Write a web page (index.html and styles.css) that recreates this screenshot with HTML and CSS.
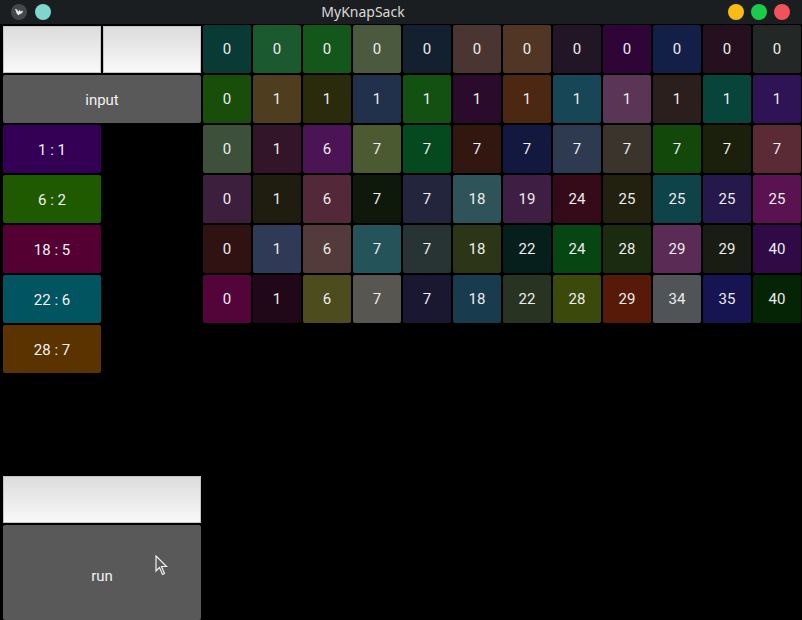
FILE: index.html
```html
<!DOCTYPE html>
<html>
<head>
<meta charset="utf-8">
<title>MyKnapSack</title>
<link rel="stylesheet" href="styles.css">
</head>
<body>
<div class="window">
  <div class="titlebar">
    <div class="tb-left">
      <span class="logo">
        <svg width="16" height="16" viewBox="0 0 16 16">
          <circle cx="8" cy="8" r="8" fill="#45474a"/>
          <path d="M4 4.8 L6 5.4 L7.4 7.8 L8.4 5.8 L9.8 7.4 L12.2 6.4 L11.2 9 L9.2 10 L7.2 11.2 L5.6 9.2 Z" fill="#ececec"/>
        </svg>
      </span>
      <span class="dot teal"></span>
    </div>
    <div class="title">MyKnapSack</div>
    <div class="tb-right">
      <span class="dot yellow"></span>
      <span class="dot green"></span>
      <span class="dot red"></span>
    </div>
  </div>
  <div class="main">
    <div class="left">
      <div class="tinput"></div>
      <div class="tinput"></div>
      <div class="btn wide">input</div>
      <div class="btn item i1">1 : 1</div>
      <div class="btn item i2">6 : 2</div>
      <div class="btn item i3">18 : 5</div>
      <div class="btn item i4">22 : 6</div>
      <div class="btn item i5">28 : 7</div>
      <div class="tinput wide bottom-input"></div>
      <div class="btn wide run">run</div>
    </div>
    <div class="grid" id="grid">
      <div class="cell" style="background:#093a33">0</div>
      <div class="cell" style="background:#1b5a2f">0</div>
      <div class="cell" style="background:#14571a">0</div>
      <div class="cell" style="background:#4b5a3f">0</div>
      <div class="cell" style="background:#13202f">0</div>
      <div class="cell" style="background:#4b3532">0</div>
      <div class="cell" style="background:#513625">0</div>
      <div class="cell" style="background:#221626">0</div>
      <div class="cell" style="background:#2f0537">0</div>
      <div class="cell" style="background:#141f47">0</div>
      <div class="cell" style="background:#24101f">0</div>
      <div class="cell" style="background:#232826">0</div>

      <div class="cell" style="background:#184e0a">0</div>
      <div class="cell" style="background:#4e3d1f">1</div>
      <div class="cell" style="background:#2a2b0d">1</div>
      <div class="cell" style="background:#22314b">1</div>
      <div class="cell" style="background:#135113">1</div>
      <div class="cell" style="background:#2b0b2b">1</div>
      <div class="cell" style="background:#4c2813">1</div>
      <div class="cell" style="background:#174757">1</div>
      <div class="cell" style="background:#5b3555">1</div>
      <div class="cell" style="background:#2a1f1d">1</div>
      <div class="cell" style="background:#07443a">1</div>
      <div class="cell" style="background:#2e1455">1</div>

      <div class="cell" style="background:#3d5039">0</div>
      <div class="cell" style="background:#33152a">1</div>
      <div class="cell" style="background:#4a1455">6</div>
      <div class="cell" style="background:#4c5a31">7</div>
      <div class="cell" style="background:#044a1e">7</div>
      <div class="cell" style="background:#321610">7</div>
      <div class="cell" style="background:#13183e">7</div>
      <div class="cell" style="background:#2e3a4f">7</div>
      <div class="cell" style="background:#3b342d">7</div>
      <div class="cell" style="background:#12480a">7</div>
      <div class="cell" style="background:#1a200c">7</div>
      <div class="cell" style="background:#5a2a35">7</div>

      <div class="cell" style="background:#3b1f3c">0</div>
      <div class="cell" style="background:#1f1d10">1</div>
      <div class="cell" style="background:#53293a">6</div>
      <div class="cell" style="background:#0f190b">7</div>
      <div class="cell" style="background:#22253b">7</div>
      <div class="cell" style="background:#2e5459">18</div>
      <div class="cell" style="background:#3e1e42">19</div>
      <div class="cell" style="background:#350b19">24</div>
      <div class="cell" style="background:#22210f">25</div>
      <div class="cell" style="background:#0f434a">25</div>
      <div class="cell" style="background:#25184a">25</div>
      <div class="cell" style="background:#5b1250">25</div>

      <div class="cell" style="background:#301212">0</div>
      <div class="cell" style="background:#2f3a57">1</div>
      <div class="cell" style="background:#533a3b">6</div>
      <div class="cell" style="background:#25535a">7</div>
      <div class="cell" style="background:#273433">7</div>
      <div class="cell" style="background:#2c3518">18</div>
      <div class="cell" style="background:#061f1d">22</div>
      <div class="cell" style="background:#064612">24</div>
      <div class="cell" style="background:#1b2b10">28</div>
      <div class="cell" style="background:#5a2b55">29</div>
      <div class="cell" style="background:#191c12">29</div>
      <div class="cell" style="background:#300a44">40</div>

      <div class="cell" style="background:#530438">0</div>
      <div class="cell" style="background:#210819">1</div>
      <div class="cell" style="background:#4c4c1e">6</div>
      <div class="cell" style="background:#585650">7</div>
      <div class="cell" style="background:#1a1731">7</div>
      <div class="cell" style="background:#183b4e">18</div>
      <div class="cell" style="background:#283322">22</div>
      <div class="cell" style="background:#3b4a0a">28</div>
      <div class="cell" style="background:#571a08">29</div>
      <div class="cell" style="background:#505457">34</div>
      <div class="cell" style="background:#171452">35</div>
      <div class="cell" style="background:#052305">40</div>
    </div>
  </div>
  <svg class="cursor" width="14" height="22" viewBox="0 0 14 22">
    <path d="M1 1 L1 16 L4.5 12.5 L7.5 19.5 L9.5 18.5 L6.5 11.5 L11.5 11.5 Z" fill="#5a5a5a" stroke="#f0f0f0" stroke-width="1.2" stroke-linejoin="miter"/>
  </svg>
</div>
</body>
</html>
```
FILE: styles.css
```css
* { box-sizing: border-box; }
html, body {
  margin: 0;
  padding: 0;
  background: #000;
}
.window {
  position: relative;
  width: 802px;
  height: 620px;
  overflow: hidden;
  background: #000;
  font-family: Roboto, "Noto Sans", sans-serif;
}
.titlebar {
  height: 24px;
  background: #1b1e21;
  display: flex;
  align-items: center;
}
.tb-left {
  width: 52px;
  display: flex;
  align-items: center;
  gap: 8px;
  padding-left: 11px;
}
.logo { display: flex; width: 16px; height: 16px; }
.dot {
  display: inline-block;
  width: 16px;
  height: 16px;
  border-radius: 50%;
}
.teal { background: #7fd6cb; }
.yellow { background: #fcbb12; }
.green { background: #1bcc4a; }
.red { background: #f1525b; }
.title {
  flex: 1;
  text-align: center;
  padding-right: 34px;
  font-family: "Noto Sans", sans-serif;
  font-size: 14px;
  color: #d9d9d9;
  line-height: 24px;
}
.tb-right {
  display: flex;
  align-items: center;
  gap: 7px;
  padding-right: 12px;
  padding-left: 20px;
}
.main {
  display: flex;
}
.left {
  width: 202px;
  padding-left: 2px;
  display: grid;
  grid-template-columns: 100px 100px;
  grid-template-rows: repeat(10, 50px) 97px;
}
.left > * { margin: 1px; }
.wide { grid-column: 1 / span 2; }
.bottom-input { grid-row: 10; }
.run { grid-row: 11; }
.tinput {
  background: linear-gradient(#dcdcdc, #f9f9f9);
  border: 1px solid #c4c4c4;
  margin-top: 2px;
}
.btn {
  background: #595959;
  color: #f2f2f2;
  font-size: 15px;
  display: flex;
  align-items: center;
  justify-content: center;
  border-radius: 2px;
  padding-top: 2px;
}
.item { grid-column: 1; }
.i1 { background: #330055; }
.i2 { background: #1f5a00; }
.i3 { background: #550033; }
.i4 { background: #005561; }
.i5 { background: #5a3300; }
.run { padding-top: 6px; }
.grid {
  width: 600px;
  display: grid;
  grid-template-columns: repeat(12, 50px);
  grid-auto-rows: 50px;
}
.cell {
  margin: 1px;
  border-radius: 2px;
  color: #ececec;
  font-size: 15px;
  display: flex;
  align-items: center;
  justify-content: center;
}
.cursor {
  position: absolute;
  left: 155px;
  top: 555px;
}
```
